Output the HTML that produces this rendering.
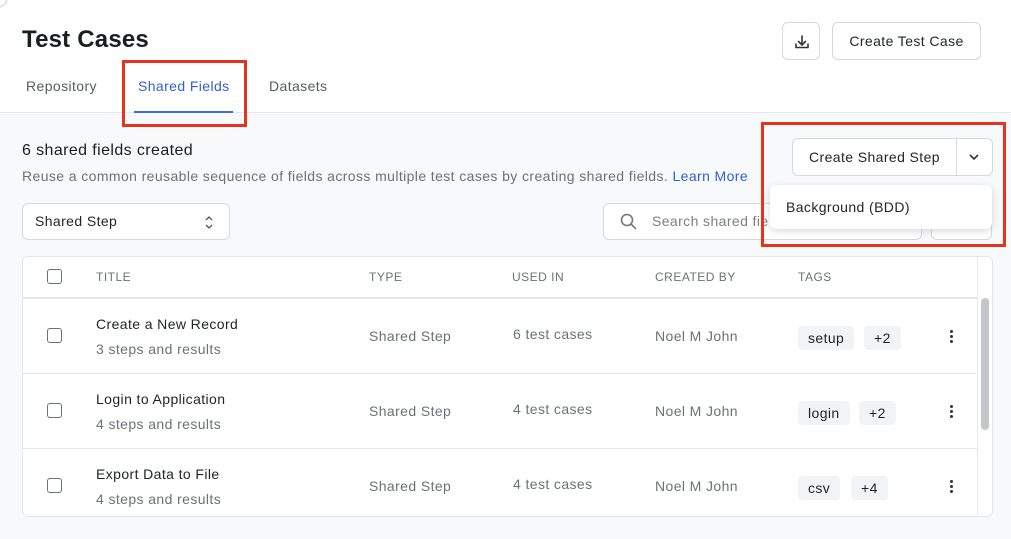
<!DOCTYPE html>
<html><head><meta charset="utf-8"><style>
*{box-sizing:border-box;margin:0;padding:0}
body{width:1011px;height:539px;overflow:hidden;background:#f8f9fb;font-family:"Liberation Sans",sans-serif;color:#1f2328;position:relative;letter-spacing:.4px}
.abs{position:absolute}
.hdr{left:0;top:0;width:1011px;height:113px;background:#fff;border-bottom:1px solid #e3e6ea}
.btn{background:#fff;border:1px solid #d5d8dc;border-radius:6px}
.tab{top:78px;font-size:14px;color:#555b63}
.chk{width:15px;height:15px;border:1.5px solid #6b7178;border-radius:3px;background:#fff}
.row{left:23px;width:954px;border-bottom:1px solid #e6e8eb}
.t1{font-size:14px;color:#1f2328}
.t2{font-size:14px;color:#6b7178}
.tag{height:24px;background:#f1f3f5;border-radius:4px;font-size:14px;line-height:24px;padding:0 10px;color:#1f2328}
.dots{width:3px;height:3px;border-radius:50%;background:#333;box-shadow:0 5px 0 #333,0 10px 0 #333}
.th{top:270px;font-size:12px;color:#6b7178;letter-spacing:.5px}
.red{border:3px solid #e8321e}
</style></head><body>
<div class="abs hdr"></div>
<div class="abs" style="left:-14px;top:-14px;width:22px;height:22px;border:1px solid #ccc;border-radius:50%"></div>
<div class="abs" style="left:22px;top:26px;font-size:24px;font-weight:bold;color:#1a1d21;letter-spacing:.2px">Test Cases</div>
<div class="abs tab" style="left:26px">Repository</div>
<div class="abs tab" style="left:138px;color:#2f5fd0">Shared Fields</div>
<div class="abs" style="left:134px;top:111px;width:99px;height:2px;background:#3b6fe0"></div>
<div class="abs tab" style="left:269px">Datasets</div>
<div class="abs red" style="left:122px;top:60px;width:125px;height:67px"></div>
<div class="abs btn" style="left:782px;top:22px;width:38px;height:38px"><svg width="38" height="38" viewBox="0 0 38 38" fill="none" stroke="#333" stroke-width="1.6" stroke-linecap="round"><path d="M19 13v9M15.5 18.5l3.5 3.5 3.5-3.5M13 21v3.5h12V21"/></svg></div>
<div class="abs btn" style="left:832px;top:22px;width:149px;height:38px;font-size:14px;line-height:36px;text-align:center">Create Test Case</div>
<div class="abs" style="left:22px;top:142px;font-size:16px;color:#1a1d21">6 shared fields created</div>
<div class="abs" style="left:22px;top:168px;font-size:14px;color:#6b7178">Reuse a common reusable sequence of fields across multiple test cases by creating shared fields. <span style="color:#2f5fd0">Learn More</span></div>
<div class="abs btn" style="left:22px;top:203px;width:208px;height:37px;font-size:14px;line-height:35px;padding-left:12px">Shared Step<svg class="abs" style="left:181px;top:11px" width="10" height="15" viewBox="0 0 10 15" fill="none" stroke="#555" stroke-width="1.3"><path d="M2 5l3-3 3 3M2 10l3 3 3-3"/></svg></div>
<div class="abs btn" style="left:603px;top:203px;width:319px;height:37px;font-size:14px;line-height:35px;padding-left:48px;color:#7a7f86">Search shared fie<svg class="abs" style="left:15px;top:8px" width="20" height="20" viewBox="0 0 20 20" fill="none" stroke="#777" stroke-width="1.6"><circle cx="8" cy="8" r="5.5"/><path d="M12 12l5 5"/></svg></div>
<div class="abs btn" style="left:931px;top:203px;width:61px;height:37px"></div>
<div class="abs btn" style="left:792px;top:138px;width:201px;height:38px;font-size:14px;line-height:36px;padding-left:16px">Create Shared Step<div class="abs" style="left:163px;top:0;width:1px;height:36px;background:#d5d8dc"></div><svg class="abs" style="left:175px;top:13px" width="12" height="10" viewBox="0 0 12 10" fill="none" stroke="#333" stroke-width="1.6"><path d="M2 3l4 4 4-4"/></svg></div>
<div class="abs" style="left:770px;top:185px;width:222px;height:44px;background:#fff;border-radius:6px;box-shadow:0 2px 8px rgba(0,0,0,.15);font-size:14px;line-height:44px;padding-left:16px">Background (BDD)</div>
<div class="abs red" style="left:761px;top:122px;width:245px;height:125px"></div>
<div class="abs" style="left:22px;top:256px;width:971px;height:261px;background:#fff;border:1px solid #e3e6ea;border-radius:6px"></div>
<div class="abs" style="left:977px;top:257px;width:1px;height:259px;background:#e6e8eb"></div>
<div class="abs" style="left:981px;top:298px;width:8px;height:132px;background:#c4c6c9;border-radius:4px"></div>
<div class="abs row" style="top:257px;height:42px;border-bottom:2px solid #e6e8eb"></div>
<div class="abs chk" style="left:47px;top:269px"></div>
<div class="abs th" style="left:96px">TITLE</div>
<div class="abs th" style="left:369px">TYPE</div>
<div class="abs th" style="left:512px">USED IN</div>
<div class="abs th" style="left:655px">CREATED BY</div>
<div class="abs th" style="left:798px">TAGS</div>

<div class="abs row" style="top:299px;height:75px"></div>
<div class="abs chk" style="left:47px;top:328px"></div>
<div class="abs t1" style="left:96px;top:316px">Create a New Record</div>
<div class="abs t2" style="left:96px;top:341px">3 steps and results</div>
<div class="abs t2" style="left:369px;top:328px">Shared Step</div>
<div class="abs t2" style="left:513px;top:326px">6 test cases</div>
<div class="abs t2" style="left:655px;top:328px">Noel M John</div>
<div class="abs tag" style="left:798px;top:326px">setup</div>
<div class="abs tag" style="left:864px;top:326px">+2</div>
<div class="abs dots" style="left:950px;top:330px"></div>

<div class="abs row" style="top:374px;height:75px"></div>
<div class="abs chk" style="left:47px;top:403px"></div>
<div class="abs t1" style="left:96px;top:391px">Login to Application</div>
<div class="abs t2" style="left:96px;top:416px">4 steps and results</div>
<div class="abs t2" style="left:369px;top:403px">Shared Step</div>
<div class="abs t2" style="left:513px;top:401px">4 test cases</div>
<div class="abs t2" style="left:655px;top:403px">Noel M John</div>
<div class="abs tag" style="left:798px;top:401px">login</div>
<div class="abs tag" style="left:859px;top:401px">+2</div>
<div class="abs dots" style="left:950px;top:405px"></div>

<div class="abs chk" style="left:47px;top:478px"></div>
<div class="abs t1" style="left:96px;top:466px">Export Data to File</div>
<div class="abs t2" style="left:96px;top:491px">4 steps and results</div>
<div class="abs t2" style="left:369px;top:478px">Shared Step</div>
<div class="abs t2" style="left:513px;top:476px">4 test cases</div>
<div class="abs t2" style="left:655px;top:478px">Noel M John</div>
<div class="abs tag" style="left:798px;top:476px">csv</div>
<div class="abs tag" style="left:851px;top:476px">+4</div>
<div class="abs dots" style="left:950px;top:480px"></div>
</body></html>
